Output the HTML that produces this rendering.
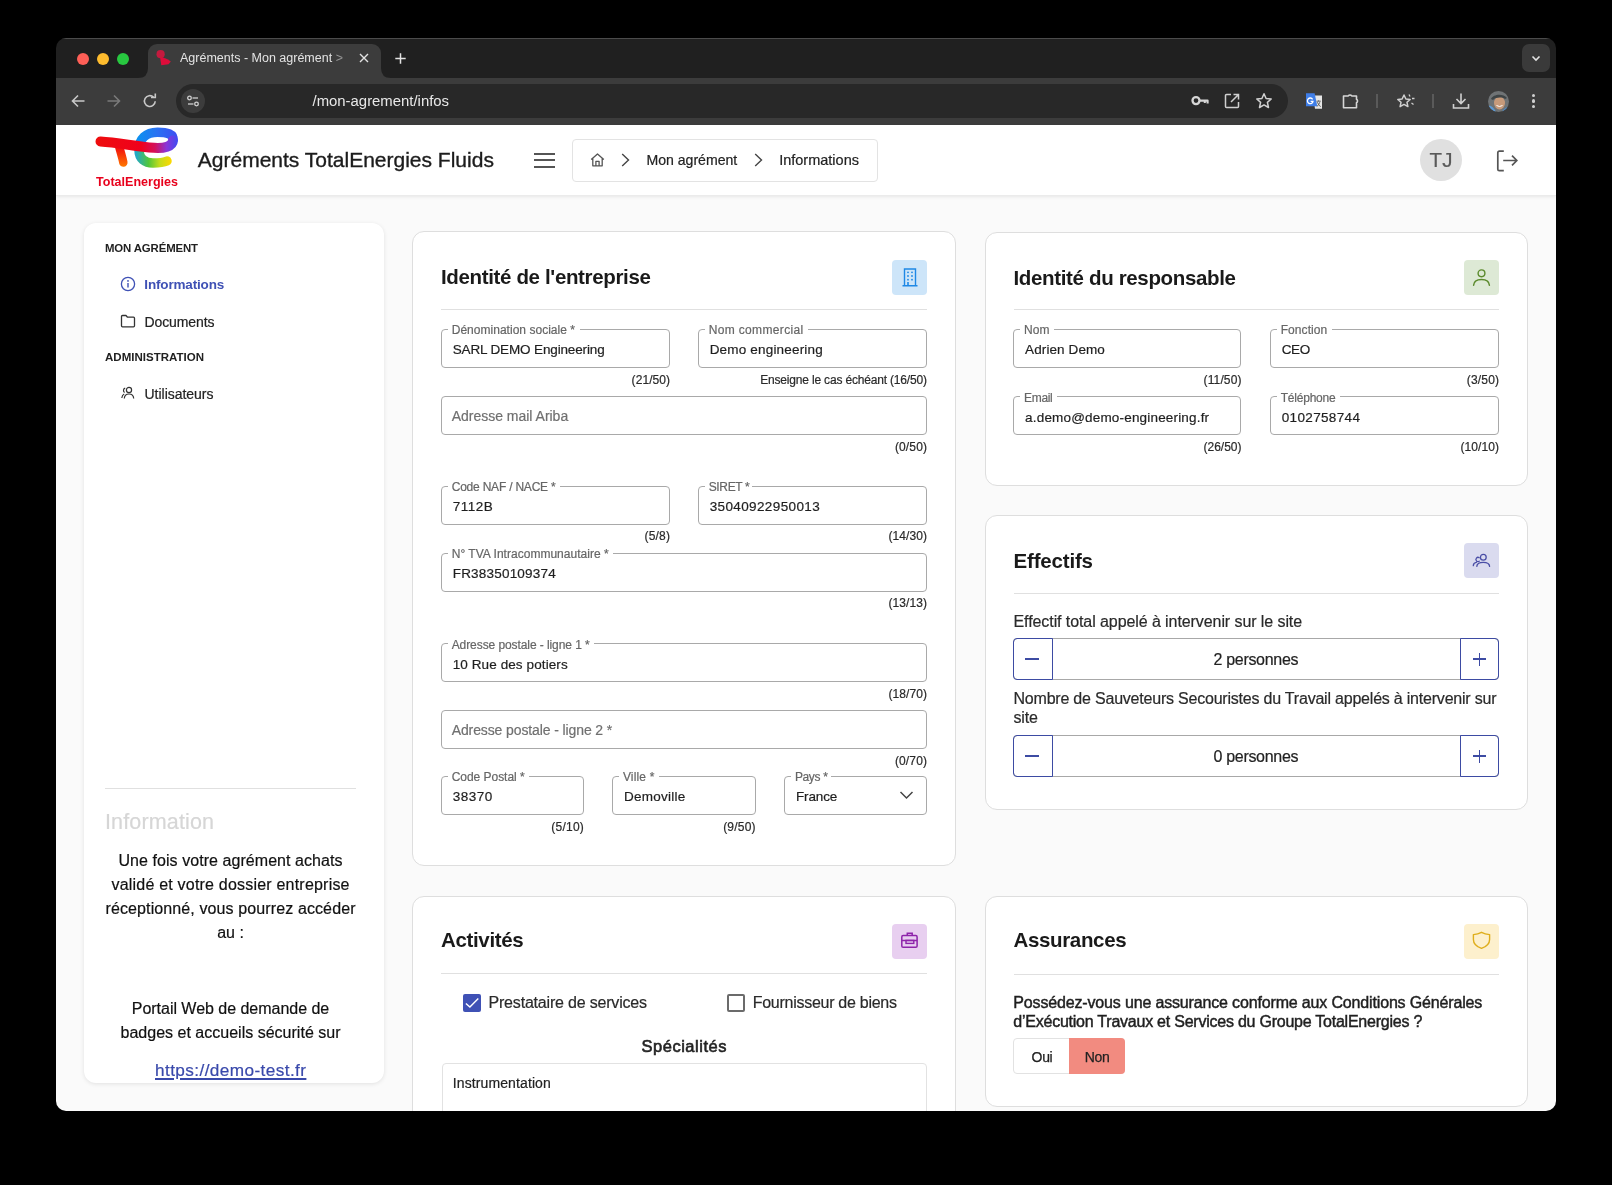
<!DOCTYPE html>
<html><head><meta charset="utf-8">
<style>
*{box-sizing:border-box;margin:0;padding:0}
html,body{width:1612px;height:1185px;background:#000;overflow:hidden;font-family:"Liberation Sans",sans-serif}
#root{position:absolute;left:0;top:0;width:1612px;height:1185px;clip-path:inset(38px 56px 74px 56px round 10px);will-change:transform}
.a{position:absolute}
.t{position:absolute;white-space:nowrap;line-height:1}
svg{overflow:visible}
</style></head><body><div id="root">
<div class="a" style="left:56px;top:38px;width:1500.00px;height:40.00px;background:#202020;"></div>
<div class="a" style="left:56px;top:78px;width:1500.00px;height:47.00px;background:#3c3c3c;"></div>
<div class="a" style="left:56px;top:125px;width:1500.00px;height:986.00px;background:#fafafa;"></div>
<div class="a" style="left:56px;top:38px;width:1500.00px;height:1.00px;background:#4b4b4b;"></div>
<div class="a" style="left:148px;top:44px;width:233px;height:40px;background:#3c3c3c;border-radius:9px 9px 0 0"></div>
<svg class="a" style="left:138px;top:68px" width="10" height="10"><path d="M0 10 Q10 10 10 0 L10 10Z" fill="#3c3c3c"/></svg>
<svg class="a" style="left:381px;top:68px" width="10" height="10"><path d="M10 10 Q0 10 0 0 L0 10Z" fill="#3c3c3c"/></svg>
<div class="a" style="left:77px;top:52.5px;width:12px;height:12px;border-radius:50%;background:#fe5f57"></div>
<div class="a" style="left:97px;top:52.5px;width:12px;height:12px;border-radius:50%;background:#febc2e"></div>
<div class="a" style="left:117px;top:52.5px;width:12px;height:12px;border-radius:50%;background:#28c840"></div>
<svg class="a" style="left:155px;top:49px" width="18" height="18" viewBox="0 0 18 18"><circle cx="5.6" cy="5.2" r="4.1" fill="#c41a3e"/><path d="M5 8.3C8 8.5 12 9.5 15.8 12.5L13.5 15.2L6.3 16.3Z" fill="#dd0c3a"/></svg>
<div class="t" style="top:52.32px;font-size:12.5px;font-weight:400;color:#e3e3e3;left:180px;">Agréments - Mon agrément <span style='color:#9a9a9a'>&gt;</span></div>
<div class="a" style="left:340px;top:48px;width:16.00px;height:22.00px;background:linear-gradient(90deg,rgba(60,60,60,0),#3c3c3c 80%);"></div>
<svg class="a" style="left:358px;top:52px" width="12" height="12" viewBox="0 0 12 12"><path d="M2 2L10 10M10 2L2 10" stroke="#e3e3e3" stroke-width="1.4"/></svg>
<svg class="a" style="left:394.5px;top:52.5px" width="11" height="11" viewBox="0 0 11 11"><path d="M5.5 0.3V10.7M0.3 5.5H10.7" stroke="#e3e3e3" stroke-width="1.5"/></svg>
<div class="a" style="left:1522px;top:44px;width:28.00px;height:28.00px;background:#3a3a3a;border-radius:7px;"></div>
<svg class="a" style="left:1530px;top:52px" width="12" height="12" viewBox="0 0 12 12"><path d="M2.5 4.5L6 8L9.5 4.5" stroke="#e3e3e3" stroke-width="1.6" fill="none"/></svg>
<svg class="a" style="left:70px;top:93px" width="16" height="16" viewBox="0 0 16 16"><path d="M14.5 8H2.5M8 2.5L2.5 8L8 13.5" stroke="#c8c8c8" stroke-width="1.6" fill="none"/></svg>
<svg class="a" style="left:106px;top:93px" width="16" height="16" viewBox="0 0 16 16"><path d="M1.5 8H13.5M8 2.5L13.5 8L8 13.5" stroke="#7a7a7a" stroke-width="1.6" fill="none"/></svg>
<svg class="a" style="left:142px;top:93px" width="16" height="16" viewBox="0 0 16 16"><path d="M13.2 8.2A5.4 5.4 0 1 1 11.6 4.2" stroke="#c8c8c8" stroke-width="1.6" fill="none"/><path d="M9 4.5H13.3V0.5" stroke="#c8c8c8" stroke-width="1.6" fill="none"/></svg>
<div class="a" style="left:176px;top:84px;width:1112.00px;height:34.00px;background:#282828;border-radius:17px;"></div>
<div class="a" style="left:181px;top:89px;width:24.00px;height:24.00px;background:#3c3c3c;border-radius:50%;"></div>
<svg class="a" style="left:185px;top:93px" width="16" height="16" viewBox="0 0 16 16"><circle cx="4.5" cy="5" r="1.8" stroke="#d0d0d0" stroke-width="1.3" fill="none"/><path d="M7.5 5H13" stroke="#d0d0d0" stroke-width="1.3"/><circle cx="11.5" cy="11" r="1.8" stroke="#d0d0d0" stroke-width="1.3" fill="none"/><path d="M3 11H8.5" stroke="#d0d0d0" stroke-width="1.3"/></svg>
<div class="t" style="top:94.19px;font-size:14.9px;font-weight:400;color:#e8e8e8;left:312.5px;">/mon-agrement/infos</div>
<svg class="a" style="left:1190px;top:93px" width="20" height="16" viewBox="0 0 20 16"><circle cx="6" cy="7.6" r="3.5" stroke="#d6d6d6" stroke-width="2.3" fill="none"/><path d="M9.6 7.6H17.6V10.6M14.8 7.6V10" stroke="#d6d6d6" stroke-width="2.1" fill="none" stroke-linejoin="round"/></svg>
<svg class="a" style="left:1224px;top:93px" width="16" height="16" viewBox="0 0 16 16"><path d="M7 1.5H2.5A1 1 0 0 0 1.5 2.5V13.5A1 1 0 0 0 2.5 14.5H13.5A1 1 0 0 0 14.5 13.5V9" stroke="#d0d0d0" stroke-width="1.5" fill="none"/><path d="M9.5 1.5H14.5V6.5M14.5 1.5L7 9" stroke="#d0d0d0" stroke-width="1.5" fill="none"/></svg>
<svg class="a" style="left:1255px;top:92px" width="18" height="18" viewBox="0 0 18 18"><path d="M9 1.8L11.1 6.5L16.2 7L12.4 10.4L13.5 15.5L9 12.9L4.5 15.5L5.6 10.4L1.8 7L6.9 6.5Z" stroke="#d0d0d0" stroke-width="1.5" fill="none" stroke-linejoin="round"/></svg>
<svg class="a" style="left:1305px;top:92px" width="18" height="18" viewBox="0 0 18 18"><path d="M8 3.5H17V16.8H10Z" fill="#e6e6e6"/><path d="M1 1.3H9.6L12.3 14.2H1Z" fill="#3f7ee8"/><path d="M7.6 7.3A2.8 2.8 0 1 0 8 9.3H5.6" stroke="#fff" stroke-width="1.3" fill="none"/><path d="M11.5 9.2H15.8M13.6 8.3V9.3M12.4 10.2Q13.6 14 15.8 14.6M14.8 10.2Q13.8 13.6 11.8 14.4" stroke="#5a5a5a" stroke-width="0.9" fill="none"/></svg>
<svg class="a" style="left:1341px;top:92px" width="18" height="18" viewBox="0 0 18 18"><path d="M2.5 4H7.3A1.9 1.9 0 0 1 10.7 4H15.5V7.3A1.9 1.9 0 0 1 15.5 10.7V15.8H2.5Z" stroke="#d6d6d6" stroke-width="1.6" fill="none" stroke-linejoin="round"/></svg>
<div class="a" style="left:1376px;top:94px;width:2.00px;height:14.00px;background:#5a5a5a;"></div>
<svg class="a" style="left:1396px;top:92px" width="20" height="18" viewBox="0 0 20 18"><path d="M8 3L9.9 7L14.2 7.4L11 10.3L11.9 14.6L8 12.4L4.1 14.6L5 10.3L1.8 7.4L6.1 7Z" stroke="#d0d0d0" stroke-width="1.5" fill="none" stroke-linejoin="round"/><path d="M13 2.5L14 4.5M16 6.5H18.5M15.5 11L17.5 12.5" stroke="#d0d0d0" stroke-width="1.3"/></svg>
<div class="a" style="left:1432px;top:94px;width:2.00px;height:14.00px;background:#5a5a5a;"></div>
<svg class="a" style="left:1452px;top:92px" width="18" height="18" viewBox="0 0 18 18"><path d="M9 1.5V11M4.5 7L9 11.5L13.5 7" stroke="#d0d0d0" stroke-width="1.6" fill="none"/><path d="M1.5 12V16H16.5V12" stroke="#d0d0d0" stroke-width="1.6" fill="none"/></svg>
<svg class="a" style="left:1487.5px;top:90.5px" width="21" height="21" viewBox="0 0 21 21"><defs><clipPath id="avc"><circle cx="10.5" cy="10.5" r="10.5"/></clipPath></defs><g clip-path="url(#avc)"><rect width="21" height="21" fill="#6f7375"/><ellipse cx="11.5" cy="12" rx="5.5" ry="6.5" fill="#c79a7a"/><path d="M3 8C5 3 15 2 19 7L17 8C14 6 8 6 5 9Z" fill="#3e4446"/><path d="M0 15C3 14 6 17 8 21H0Z" fill="#5c9ad6"/><path d="M14 21C15 18 18 16 21 16V21Z" fill="#4a8acb"/><path d="M8.5 14.5Q11.5 16.5 14.5 14.5" stroke="#fff" stroke-width="1" fill="none"/></g></svg>
<div class="a" style="left:1532.2px;top:93.9px;width:3.2px;height:3.2px;border-radius:50%;background:#d0d0d0"></div>
<div class="a" style="left:1532.2px;top:99.4px;width:3.2px;height:3.2px;border-radius:50%;background:#d0d0d0"></div>
<div class="a" style="left:1532.2px;top:104.9px;width:3.2px;height:3.2px;border-radius:50%;background:#d0d0d0"></div>
<div class="a" style="left:56px;top:125px;width:1500.00px;height:71.00px;background:#fff;box-shadow:0 1px 3px rgba(0,0,0,0.08);border-bottom:1px solid #ebebeb;"></div>
<svg class="a" style="left:88px;top:125px" width="100" height="67" viewBox="0 0 100 67">
<defs>
<linearGradient id="eg1" gradientUnits="userSpaceOnUse" x1="8" y1="0" x2="90" y2="0"><stop offset="0" stop-color="#ee0d0d"/><stop offset="0.55" stop-color="#f0001c"/><stop offset="0.72" stop-color="#d4105a"/><stop offset="0.86" stop-color="#8a35d8"/><stop offset="1" stop-color="#3e4cf2"/></linearGradient>
<linearGradient id="eg2" gradientUnits="userSpaceOnUse" x1="48" y1="0" x2="90" y2="0"><stop offset="0" stop-color="#0a93f0"/><stop offset="0.5" stop-color="#2a72f2"/><stop offset="1" stop-color="#3e4cf2"/></linearGradient>
<linearGradient id="eg3" gradientUnits="userSpaceOnUse" x1="48" y1="0" x2="84" y2="0"><stop offset="0" stop-color="#22a8c8"/><stop offset="0.35" stop-color="#52c63a"/><stop offset="0.65" stop-color="#c2dc1c"/><stop offset="1" stop-color="#ffd800"/></linearGradient>
<linearGradient id="tg" gradientUnits="userSpaceOnUse" x1="0" y1="20" x2="0" y2="42"><stop offset="0" stop-color="#f0000f"/><stop offset="1" stop-color="#ff7a00"/></linearGradient>
</defs>
<path d="M51 25 C51 34 57 38 65 38 C71 38 75.5 37.5 79 36" stroke="url(#eg3)" stroke-width="9.5" fill="none" stroke-linecap="round"/>
<path d="M85 15.5 C86 9 79 7.3 69.5 7.3 C58 7.3 51 14 51 25" stroke="url(#eg2)" stroke-width="9.5" fill="none"/>
<path d="M31 21 C32.5 27 34.5 33 35.3 37.5" stroke="url(#tg)" stroke-width="8.5" fill="none" stroke-linecap="round"/>
<path d="M12.5 16.5 C30 17.5 48 21.5 66 22.8 C76 23.5 84.5 21.5 85 15.5" stroke="url(#eg1)" stroke-width="10" fill="none" stroke-linecap="round"/>
<text x="8" y="60.6" font-family="Liberation Sans" font-weight="700" font-size="12.8" fill="#e8001c" textLength="82" lengthAdjust="spacingAndGlyphs">TotalEnergies</text>
</svg>
<div class="t" style="top:149.42px;font-size:21px;font-weight:400;color:#1c1c1c;-webkit-text-stroke:0.35px #1c1c1c;left:197.8px;">Agréments TotalEnergies Fluids</div>
<div class="a" style="left:533.5px;top:153px;width:21.00px;height:2.00px;background:#555;"></div>
<div class="a" style="left:533.5px;top:159.3px;width:21.00px;height:2.00px;background:#555;"></div>
<div class="a" style="left:533.5px;top:165.6px;width:21.00px;height:2.00px;background:#555;"></div>
<div class="a" style="left:572px;top:138.5px;width:306.00px;height:43.00px;border:1px solid #e3e3e3;border-radius:4px;background:#fff;"></div>
<svg class="a" style="left:589.5px;top:153px" width="15" height="14" viewBox="0 0 15 14"><path d="M1.2 6.5L7.5 1L13.8 6.5M2.8 5.3V12.8H12.2V5.3M5.9 12.8V8.3H9.1V12.8" stroke="#555" stroke-width="1.3" fill="none" stroke-linejoin="round"/></svg>
<svg class="a" style="left:621px;top:153px" width="9" height="14" viewBox="0 0 9 14"><path d="M1.2 1L7.5 7L1.2 13" stroke="#444" stroke-width="1.4" fill="none"/></svg>
<svg class="a" style="left:754.3px;top:153px" width="9" height="14" viewBox="0 0 9 14"><path d="M1.2 1L7.5 7L1.2 13" stroke="#444" stroke-width="1.4" fill="none"/></svg>
<div class="t" style="top:153.26px;font-size:14.1px;font-weight:400;color:#222;-webkit-text-stroke:0.2px #222;left:646.4px;">Mon agrément</div>
<div class="t" style="top:152.93px;font-size:14.5px;font-weight:400;color:#222;-webkit-text-stroke:0.2px #222;left:779.2px;">Informations</div>
<div class="a" style="left:1420px;top:139px;width:42.00px;height:42.00px;background:#e0e0e0;border-radius:50%;"></div>
<div class="t" style="top:150.25px;font-size:20.5px;font-weight:400;color:#595959;-webkit-text-stroke:0.2px #595959;left:941.00px;width:1000px;text-align:center;">TJ</div>
<svg class="a" style="left:1495px;top:149px" width="25" height="24" viewBox="0 0 25 24"><path d="M8.8 2.2H4.3A1.5 1.5 0 0 0 2.8 3.7V20.2A1.5 1.5 0 0 0 4.3 21.7H8.8" stroke="#555" stroke-width="1.7" fill="none"/><path d="M8.2 11.5H22M17 6.7L21.8 11.5L17 16.3" stroke="#555" stroke-width="1.7" fill="none"/></svg>
<div class="a" style="left:84px;top:223px;width:300.00px;height:860.00px;background:#fff;border-radius:12px;box-shadow:0 1px 4px rgba(0,0,0,0.10);"></div>
<div class="t" style="top:243.15px;font-size:11.4px;font-weight:700;color:#212121;letter-spacing:-0.136px;left:105px;">MON AGRÉMENT</div>
<svg class="a" style="left:120px;top:276px" width="16" height="16" viewBox="0 0 16 16"><circle cx="8" cy="8" r="6.6" stroke="#3f51b5" stroke-width="1.3" fill="none"/><path d="M8 7V11.5" stroke="#3f51b5" stroke-width="1.4"/><circle cx="8" cy="4.9" r="0.9" fill="#3f51b5"/></svg>
<div class="t" style="top:278.17px;font-size:13.5px;font-weight:700;color:#3f51b5;letter-spacing:-0.161px;left:144.3px;">Informations</div>
<svg class="a" style="left:120px;top:313px" width="16" height="16" viewBox="0 0 16 16"><path d="M1.5 3.5A1 1 0 0 1 2.5 2.5H6L7.5 4.2H13.5A1 1 0 0 1 14.5 5.2V12.8A1 1 0 0 1 13.5 13.8H2.5A1 1 0 0 1 1.5 12.8Z" stroke="#333" stroke-width="1.3" fill="none" stroke-linejoin="round"/></svg>
<div class="t" style="top:314.95px;font-size:14px;font-weight:400;color:#222;letter-spacing:-0.102px;-webkit-text-stroke:0.2px #222;left:144.5px;">Documents</div>
<div class="t" style="top:351.87px;font-size:11.5px;font-weight:700;color:#212121;letter-spacing:0.014px;left:105px;">ADMINISTRATION</div>
<svg class="a" style="left:120px;top:385px" width="16" height="16" viewBox="0 0 16 16"><circle cx="9" cy="5" r="2.6" stroke="#333" stroke-width="1.2" fill="none"/><path d="M4.3 13.5C4.5 10.5 6.5 9 9 9C11.5 9 13.5 10.5 13.7 13.5" stroke="#333" stroke-width="1.2" fill="none"/><path d="M5.2 3.2A2.3 2.3 0 0 0 4.6 7.4M1.8 13C2 11 2.8 9.6 4.2 9" stroke="#333" stroke-width="1.2" fill="none"/></svg>
<div class="t" style="top:386.75px;font-size:14px;font-weight:400;color:#222;letter-spacing:-0.023px;-webkit-text-stroke:0.2px #222;left:144.5px;">Utilisateurs</div>
<div class="a" style="left:105px;top:788px;width:251.00px;height:1.00px;background:#e0e0e0;"></div>
<div class="t" style="top:811.50px;font-size:21.5px;font-weight:400;color:#d6d6d6;letter-spacing:0.144px;-webkit-text-stroke:0.2px #d6d6d6;left:105px;">Information</div>
<div class="t" style="top:853.16px;font-size:16px;font-weight:400;color:#111;letter-spacing:0.057px;-webkit-text-stroke:0.2px #111;left:-269.47px;width:1000px;text-align:center;">Une fois votre agrément achats</div>
<div class="t" style="top:877.06px;font-size:16px;font-weight:400;color:#111;letter-spacing:0.205px;-webkit-text-stroke:0.2px #111;left:-269.40px;width:1000px;text-align:center;">validé et votre dossier entreprise</div>
<div class="t" style="top:901.06px;font-size:16px;font-weight:400;color:#111;letter-spacing:0.113px;-webkit-text-stroke:0.2px #111;left:-269.44px;width:1000px;text-align:center;">réceptionné, vous pourrez accéder</div>
<div class="t" style="top:925.06px;font-size:16px;font-weight:400;color:#111;-webkit-text-stroke:0.2px #111;left:-269.50px;width:1000px;text-align:center;">au :</div>
<div class="t" style="top:1001.46px;font-size:16px;font-weight:400;color:#111;letter-spacing:-0.023px;-webkit-text-stroke:0.2px #111;left:-269.51px;width:1000px;text-align:center;">Portail Web de demande de</div>
<div class="t" style="top:1025.36px;font-size:16px;font-weight:400;color:#111;letter-spacing:0.011px;-webkit-text-stroke:0.2px #111;left:-269.49px;width:1000px;text-align:center;">badges et accueils sécurité sur</div>
<div class="t" style="top:1061.84px;font-size:17.2px;font-weight:400;color:#3949ab;letter-spacing:0.405px;-webkit-text-stroke:0.2px #3949ab;left:-269.30px;width:1000px;text-align:center;text-decoration:underline;text-underline-offset:2px;text-decoration-thickness:1.5px;">https://demo-test.fr</div>
<div class="a" style="left:412px;top:231px;width:543.50px;height:635.00px;background:#fff;border:1px solid #dedede;border-radius:12px;"></div>
<div class="t" style="top:266.85px;font-size:20.5px;font-weight:700;color:#1a1a1a;letter-spacing:-0.35px;left:441px;">Identité de l'entreprise</div>
<div class="a" style="left:892.0px;top:260px;width:35.00px;height:35.00px;background:#cde5f9;border-radius:4px;"></div>
<svg class="a" style="left:902px;top:267px" width="16" height="20" viewBox="0 0 16 20"><path d="M2.5 18.5V2H13.5V18.5M0.5 18.8H15.5" stroke="#1e88e5" stroke-width="1.4" fill="none"/><g fill="#1e88e5"><circle cx="6" cy="5.3" r="0.9"/><circle cx="10" cy="5.3" r="0.9"/><circle cx="6" cy="9" r="0.9"/><circle cx="10" cy="9" r="0.9"/><circle cx="6" cy="12.7" r="0.9"/><circle cx="10" cy="12.7" r="0.9"/></g><path d="M6 15V18.5" stroke="#1e88e5" stroke-width="1.6"/></svg>
<div class="a" style="left:441px;top:309px;width:486.00px;height:1.00px;background:#e0e0e0;"></div>
<div class="a" style="left:441px;top:328.79999999999995px;width:229.00px;height:39.00px;border:1px solid #a9a9a9;border-radius:4px;background:#fff;"></div>
<div class="a" style="left:448px;top:328.2px;width:131.50px;height:2.40px;background:#fff;"></div>
<div class="t" style="top:324.44px;font-size:12px;font-weight:400;color:#666;letter-spacing:0.026px;-webkit-text-stroke:0.2px #666;left:451.7px;">Dénomination sociale *</div>
<div class="t" style="top:343.37px;font-size:13.5px;font-weight:400;color:#1f1f1f;letter-spacing:-0.141px;-webkit-text-stroke:0.2px #1f1f1f;left:452.7px;">SARL DEMO Engineering</div>
<div class="t" style="top:373.64px;font-size:12px;font-weight:400;color:#2a2a2a;letter-spacing:0.061px;-webkit-text-stroke:0.2px #2a2a2a;right:941.94px;">(21/50)</div>
<div class="a" style="left:698px;top:328.79999999999995px;width:229.00px;height:39.00px;border:1px solid #a9a9a9;border-radius:4px;background:#fff;"></div>
<div class="a" style="left:705px;top:328.2px;width:102.70px;height:2.40px;background:#fff;"></div>
<div class="t" style="top:324.44px;font-size:12px;font-weight:400;color:#666;letter-spacing:0.345px;-webkit-text-stroke:0.2px #666;left:708.7px;">Nom commercial</div>
<div class="t" style="top:343.37px;font-size:13.5px;font-weight:400;color:#1f1f1f;letter-spacing:0.178px;-webkit-text-stroke:0.2px #1f1f1f;left:709.7px;">Demo engineering</div>
<div class="t" style="top:373.64px;font-size:12px;font-weight:400;color:#2a2a2a;letter-spacing:-0.177px;-webkit-text-stroke:0.2px #2a2a2a;right:685.18px;">Enseigne le cas échéant (16/50)</div>
<div class="a" style="left:441px;top:396.0px;width:486.00px;height:39.00px;border:1px solid #a9a9a9;border-radius:4px;background:#fff;"></div>
<div class="t" style="top:409.45px;font-size:14px;font-weight:400;color:#707070;letter-spacing:-0.013px;-webkit-text-stroke:0.2px #707070;left:451.7px;">Adresse mail Ariba</div>
<div class="t" style="top:440.84px;font-size:12px;font-weight:400;color:#2a2a2a;letter-spacing:0.148px;-webkit-text-stroke:0.2px #2a2a2a;right:684.85px;">(0/50)</div>
<div class="a" style="left:441px;top:485.59999999999997px;width:229.00px;height:39.00px;border:1px solid #a9a9a9;border-radius:4px;background:#fff;"></div>
<div class="a" style="left:448px;top:485.0px;width:112.20px;height:2.40px;background:#fff;"></div>
<div class="t" style="top:481.24px;font-size:12px;font-weight:400;color:#666;letter-spacing:-0.211px;-webkit-text-stroke:0.2px #666;left:451.7px;">Code NAF / NACE *</div>
<div class="t" style="top:500.17px;font-size:13.5px;font-weight:400;color:#1f1f1f;letter-spacing:0.488px;-webkit-text-stroke:0.2px #1f1f1f;left:452.7px;">7112B</div>
<div class="t" style="top:530.44px;font-size:12px;font-weight:400;color:#2a2a2a;letter-spacing:0.203px;-webkit-text-stroke:0.2px #2a2a2a;right:941.80px;">(5/8)</div>
<div class="a" style="left:698px;top:485.59999999999997px;width:229.00px;height:39.00px;border:1px solid #a9a9a9;border-radius:4px;background:#fff;"></div>
<div class="a" style="left:705px;top:485.0px;width:47.20px;height:2.40px;background:#fff;"></div>
<div class="t" style="top:481.24px;font-size:12px;font-weight:400;color:#666;letter-spacing:-0.35px;-webkit-text-stroke:0.2px #666;left:708.7px;">SIRET *</div>
<div class="t" style="top:500.17px;font-size:13.5px;font-weight:400;color:#1f1f1f;letter-spacing:0.375px;-webkit-text-stroke:0.2px #1f1f1f;left:709.7px;">35040922950013</div>
<div class="t" style="top:530.44px;font-size:12px;font-weight:400;color:#2a2a2a;letter-spacing:0.078px;-webkit-text-stroke:0.2px #2a2a2a;right:684.92px;">(14/30)</div>
<div class="a" style="left:441px;top:552.6px;width:486.00px;height:39.00px;border:1px solid #a9a9a9;border-radius:4px;background:#fff;"></div>
<div class="a" style="left:448px;top:552.0px;width:165.20px;height:2.40px;background:#fff;"></div>
<div class="t" style="top:548.24px;font-size:12px;font-weight:400;color:#666;letter-spacing:0.022px;-webkit-text-stroke:0.2px #666;left:451.7px;">N° TVA Intracommunautaire *</div>
<div class="t" style="top:567.17px;font-size:13.5px;font-weight:400;color:#1f1f1f;letter-spacing:0.201px;-webkit-text-stroke:0.2px #1f1f1f;left:452.7px;">FR38350109374</div>
<div class="t" style="top:597.44px;font-size:12px;font-weight:400;color:#2a2a2a;letter-spacing:0.078px;-webkit-text-stroke:0.2px #2a2a2a;right:684.92px;">(13/13)</div>
<div class="a" style="left:441px;top:643.0px;width:486.00px;height:39.00px;border:1px solid #a9a9a9;border-radius:4px;background:#fff;"></div>
<div class="a" style="left:448px;top:642.4px;width:146.20px;height:2.40px;background:#fff;"></div>
<div class="t" style="top:638.64px;font-size:12px;font-weight:400;color:#666;letter-spacing:-0.081px;-webkit-text-stroke:0.2px #666;left:451.7px;">Adresse postale - ligne 1 *</div>
<div class="t" style="top:657.57px;font-size:13.5px;font-weight:400;color:#1f1f1f;letter-spacing:0.098px;-webkit-text-stroke:0.2px #1f1f1f;left:452.7px;">10 Rue des potiers</div>
<div class="t" style="top:687.84px;font-size:12px;font-weight:400;color:#2a2a2a;letter-spacing:0.078px;-webkit-text-stroke:0.2px #2a2a2a;right:684.92px;">(18/70)</div>
<div class="a" style="left:441px;top:709.8px;width:486.00px;height:39.00px;border:1px solid #a9a9a9;border-radius:4px;background:#fff;"></div>
<div class="t" style="top:723.25px;font-size:14px;font-weight:400;color:#707070;letter-spacing:-0.109px;-webkit-text-stroke:0.2px #707070;left:451.7px;">Adresse postale - ligne 2 *</div>
<div class="t" style="top:754.64px;font-size:12px;font-weight:400;color:#2a2a2a;letter-spacing:0.148px;-webkit-text-stroke:0.2px #2a2a2a;right:684.85px;">(0/70)</div>
<div class="a" style="left:441px;top:775.8px;width:142.80px;height:39.00px;border:1px solid #a9a9a9;border-radius:4px;background:#fff;"></div>
<div class="a" style="left:448px;top:775.1999999999999px;width:81.20px;height:2.40px;background:#fff;"></div>
<div class="t" style="top:771.44px;font-size:12px;font-weight:400;color:#666;letter-spacing:-0.033px;-webkit-text-stroke:0.2px #666;left:451.7px;">Code Postal *</div>
<div class="t" style="top:790.37px;font-size:13.5px;font-weight:400;color:#1f1f1f;letter-spacing:0.488px;-webkit-text-stroke:0.2px #1f1f1f;left:452.7px;">38370</div>
<div class="t" style="top:820.64px;font-size:12px;font-weight:400;color:#2a2a2a;letter-spacing:0.228px;-webkit-text-stroke:0.2px #2a2a2a;right:1027.97px;">(5/10)</div>
<div class="a" style="left:612.2px;top:775.8px;width:143.40px;height:39.00px;border:1px solid #a9a9a9;border-radius:4px;background:#fff;"></div>
<div class="a" style="left:619.2px;top:775.1999999999999px;width:39.70px;height:2.40px;background:#fff;"></div>
<div class="t" style="top:771.44px;font-size:12px;font-weight:400;color:#666;letter-spacing:0.172px;-webkit-text-stroke:0.2px #666;left:622.9000000000001px;">Ville *</div>
<div class="t" style="top:790.37px;font-size:13.5px;font-weight:400;color:#1f1f1f;letter-spacing:0.277px;-webkit-text-stroke:0.2px #1f1f1f;left:623.9000000000001px;">Demoville</div>
<div class="t" style="top:820.64px;font-size:12px;font-weight:400;color:#2a2a2a;letter-spacing:0.228px;-webkit-text-stroke:0.2px #2a2a2a;right:856.17px;">(9/50)</div>
<div class="a" style="left:784.2px;top:775.8px;width:142.60px;height:39.00px;border:1px solid #a9a9a9;border-radius:4px;background:#fff;"></div>
<div class="a" style="left:791.2px;top:775.1999999999999px;width:40.20px;height:2.40px;background:#fff;"></div>
<div class="t" style="top:771.44px;font-size:12px;font-weight:400;color:#666;letter-spacing:-0.35px;-webkit-text-stroke:0.2px #666;left:794.9000000000001px;">Pays *</div>
<div class="t" style="top:790.37px;font-size:13.5px;font-weight:400;color:#1f1f1f;letter-spacing:-0.106px;-webkit-text-stroke:0.2px #1f1f1f;left:795.9000000000001px;">France</div>
<svg class="a" style="left:899px;top:790px" width="15" height="10" viewBox="0 0 15 10"><path d="M1.5 2L7.5 8L13.5 2" stroke="#444" stroke-width="1.5" fill="none"/></svg>
<div class="a" style="left:984.5px;top:231.5px;width:543.00px;height:254.50px;background:#fff;border:1px solid #dedede;border-radius:12px;"></div>
<div class="t" style="top:267.85px;font-size:20.5px;font-weight:700;color:#1a1a1a;letter-spacing:-0.346px;left:1013.5px;">Identité du responsable</div>
<div class="a" style="left:1464.0px;top:260px;width:35.00px;height:35.00px;background:#dde9d5;border-radius:4px;"></div>
<svg class="a" style="left:1471px;top:267px" width="21" height="21" viewBox="0 0 21 21"><circle cx="10.5" cy="6.3" r="3.4" stroke="#5b8a2c" stroke-width="1.4" fill="none"/><path d="M2.6 18.3C2.8 14.2 6.2 12.4 10.5 12.4C14.8 12.4 18.2 14.2 18.4 18.3" stroke="#5b8a2c" stroke-width="1.5" fill="none" stroke-linecap="round"/></svg>
<div class="a" style="left:1013.5px;top:309px;width:485.50px;height:1.00px;background:#e0e0e0;"></div>
<div class="a" style="left:1013.4px;top:328.79999999999995px;width:228.10px;height:39.00px;border:1px solid #a9a9a9;border-radius:4px;background:#fff;"></div>
<div class="a" style="left:1020.4px;top:328.2px;width:33.50px;height:2.40px;background:#fff;"></div>
<div class="t" style="top:324.44px;font-size:12px;font-weight:400;color:#666;letter-spacing:-0.022px;-webkit-text-stroke:0.2px #666;left:1024.1px;">Nom</div>
<div class="t" style="top:343.37px;font-size:13.5px;font-weight:400;color:#1f1f1f;letter-spacing:0.1px;-webkit-text-stroke:0.2px #1f1f1f;left:1025.1px;">Adrien Demo</div>
<div class="t" style="top:373.64px;font-size:12px;font-weight:400;color:#2a2a2a;letter-spacing:0.143px;-webkit-text-stroke:0.2px #2a2a2a;right:370.36px;">(11/50)</div>
<div class="a" style="left:1270px;top:328.79999999999995px;width:229.00px;height:39.00px;border:1px solid #a9a9a9;border-radius:4px;background:#fff;"></div>
<div class="a" style="left:1277px;top:328.2px;width:54.70px;height:2.40px;background:#fff;"></div>
<div class="t" style="top:324.44px;font-size:12px;font-weight:400;color:#666;letter-spacing:0.067px;-webkit-text-stroke:0.2px #666;left:1280.7px;">Fonction</div>
<div class="t" style="top:343.37px;font-size:13.5px;font-weight:400;color:#1f1f1f;letter-spacing:-0.35px;-webkit-text-stroke:0.2px #1f1f1f;left:1281.7px;">CEO</div>
<div class="t" style="top:373.64px;font-size:12px;font-weight:400;color:#2a2a2a;letter-spacing:0.188px;-webkit-text-stroke:0.2px #2a2a2a;right:112.81px;">(3/50)</div>
<div class="a" style="left:1013.4px;top:396.0px;width:228.10px;height:39.00px;border:1px solid #a9a9a9;border-radius:4px;background:#fff;"></div>
<div class="a" style="left:1020.4px;top:395.40000000000003px;width:36.70px;height:2.40px;background:#fff;"></div>
<div class="t" style="top:391.64px;font-size:12px;font-weight:400;color:#666;letter-spacing:-0.35px;-webkit-text-stroke:0.2px #666;left:1024.1px;">Email</div>
<div class="t" style="top:410.57px;font-size:13.5px;font-weight:400;color:#1f1f1f;letter-spacing:0.177px;-webkit-text-stroke:0.2px #1f1f1f;left:1025.1px;">a.demo@demo-engineering.fr</div>
<div class="t" style="top:440.84px;font-size:12px;font-weight:400;color:#2a2a2a;letter-spacing:-0.005px;-webkit-text-stroke:0.2px #2a2a2a;right:370.50px;">(26/50)</div>
<div class="a" style="left:1270px;top:396.0px;width:229.00px;height:39.00px;border:1px solid #a9a9a9;border-radius:4px;background:#fff;"></div>
<div class="a" style="left:1277px;top:395.40000000000003px;width:63.20px;height:2.40px;background:#fff;"></div>
<div class="t" style="top:391.64px;font-size:12px;font-weight:400;color:#666;letter-spacing:-0.215px;-webkit-text-stroke:0.2px #666;left:1280.7px;">Téléphone</div>
<div class="t" style="top:410.57px;font-size:13.5px;font-weight:400;color:#1f1f1f;letter-spacing:0.356px;-webkit-text-stroke:0.2px #1f1f1f;left:1281.7px;">0102758744</div>
<div class="t" style="top:440.84px;font-size:12px;font-weight:400;color:#2a2a2a;letter-spacing:0.078px;-webkit-text-stroke:0.2px #2a2a2a;right:112.92px;">(10/10)</div>
<div class="a" style="left:984.5px;top:514.6px;width:543.00px;height:295.80px;background:#fff;border:1px solid #dedede;border-radius:12px;"></div>
<div class="t" style="top:550.75px;font-size:20.5px;font-weight:700;color:#1a1a1a;letter-spacing:-0.174px;left:1013.5px;">Effectifs</div>
<div class="a" style="left:1464.0px;top:543.2px;width:35.00px;height:35.00px;background:#dadbef;border-radius:4px;"></div>
<svg class="a" style="left:1471px;top:550px" width="21" height="21" viewBox="0 0 21 21"><circle cx="12.3" cy="7.2" r="2.9" stroke="#4a4ea6" stroke-width="1.3" fill="none"/><path d="M5.8 16.4C6 13.6 8.6 12.4 12.3 12.4C16 12.4 18.4 13.6 18.6 16.4" stroke="#4a4ea6" stroke-width="1.3" fill="none" stroke-linecap="round"/><path d="M8.2 7.7A2.1 2.1 0 1 0 8.2 11.2M2.3 15.7C2.4 13.7 3.5 12.6 5.4 12.4" stroke="#4a4ea6" stroke-width="1.3" fill="none" stroke-linecap="round"/></svg>
<div class="a" style="left:1013.5px;top:592.5px;width:485.50px;height:1.00px;background:#e0e0e0;"></div>
<div class="t" style="top:613.66px;font-size:16px;font-weight:400;color:#2a2a2a;letter-spacing:-0.082px;-webkit-text-stroke:0.2px #2a2a2a;left:1013.5px;">Effectif total appelé à intervenir sur le site</div>
<div class="a" style="left:1013px;top:638px;width:486.00px;height:42.00px;border:1px solid #a8a8a8;border-radius:4px;background:#fff;"></div>
<div class="a" style="left:1013px;top:638px;width:39.50px;height:42.00px;border:1.2px solid #3d4ba3;border-radius:4px 0 0 4px;"></div>
<div class="a" style="left:1460.3px;top:638px;width:38.70px;height:42.00px;border:1.2px solid #3d4ba3;border-radius:0 4px 4px 0;"></div>
<div class="a" style="left:1025.3px;top:658.2px;width:13.70px;height:1.60px;background:#3d4ba3;"></div>
<div class="a" style="left:1473.2px;top:658.4px;width:12.60px;height:1.20px;background:#3d4ba3;"></div>
<div class="a" style="left:1478.9px;top:652.5px;width:1.20px;height:13.00px;background:#3d4ba3;"></div>
<div class="t" style="top:651.76px;font-size:16px;font-weight:400;color:#222;letter-spacing:-0.306px;-webkit-text-stroke:0.2px #222;left:755.85px;width:1000px;text-align:center;">2 personnes</div>
<div class="t" style="top:691.46px;font-size:16px;font-weight:400;color:#2a2a2a;letter-spacing:-0.211px;-webkit-text-stroke:0.2px #2a2a2a;left:1013.5px;">Nombre de Sauveteurs Secouristes du Travail appelés à intervenir sur</div>
<div class="t" style="top:710.36px;font-size:16px;font-weight:400;color:#2a2a2a;letter-spacing:-0.135px;-webkit-text-stroke:0.2px #2a2a2a;left:1013.5px;">site</div>
<div class="a" style="left:1013px;top:735.2px;width:486.00px;height:41.60px;border:1px solid #a8a8a8;border-radius:4px;background:#fff;"></div>
<div class="a" style="left:1013px;top:735.2px;width:39.50px;height:41.60px;border:1.2px solid #3d4ba3;border-radius:4px 0 0 4px;"></div>
<div class="a" style="left:1460.3px;top:735.2px;width:38.70px;height:41.60px;border:1.2px solid #3d4ba3;border-radius:0 4px 4px 0;"></div>
<div class="a" style="left:1025.3px;top:755.2px;width:13.70px;height:1.60px;background:#3d4ba3;"></div>
<div class="a" style="left:1473.2px;top:755.4px;width:12.60px;height:1.20px;background:#3d4ba3;"></div>
<div class="a" style="left:1478.9px;top:749.5px;width:1.20px;height:13.00px;background:#3d4ba3;"></div>
<div class="t" style="top:748.66px;font-size:16px;font-weight:400;color:#222;letter-spacing:-0.306px;-webkit-text-stroke:0.2px #222;left:755.85px;width:1000px;text-align:center;">0 personnes</div>
<div class="a" style="left:412px;top:895.6px;width:543.50px;height:244.40px;background:#fff;border:1px solid #dedede;border-radius:12px;"></div>
<div class="t" style="top:930.05px;font-size:20.5px;font-weight:700;color:#1a1a1a;letter-spacing:-0.35px;left:441px;">Activités</div>
<div class="a" style="left:892.0px;top:924px;width:35.00px;height:35.00px;background:#e8cff0;border-radius:4px;"></div>
<svg class="a" style="left:899px;top:931px" width="20" height="20" viewBox="0 0 20 20"><rect x="2.8" y="4.6" width="15.3" height="11.6" rx="1.3" stroke="#8e24aa" stroke-width="1.5" fill="none"/><path d="M8.3 4.6V2.3H13.2V4.6M2.8 9.4H18.1" stroke="#8e24aa" stroke-width="1.5" fill="none"/><rect x="7" y="9.4" width="7.8" height="3" stroke="#8e24aa" stroke-width="1.4" fill="none"/></svg>
<div class="a" style="left:441px;top:973px;width:486.00px;height:1.00px;background:#e0e0e0;"></div>
<div class="a" style="left:463.2px;top:994.2px;width:17.60px;height:17.60px;background:#3f51b5;border-radius:2px;"></div>
<svg class="a" style="left:463px;top:994px" width="18" height="18" viewBox="0 0 18 18"><path d="M2.9 9.4L6.9 13L15.3 4.4" stroke="#fff" stroke-width="1.4" fill="none"/></svg>
<div class="t" style="top:994.66px;font-size:16px;font-weight:400;color:#2a2a2a;letter-spacing:-0.192px;-webkit-text-stroke:0.2px #2a2a2a;left:488.5px;">Prestataire de services</div>
<div class="a" style="left:727.4px;top:994.2px;width:17.60px;height:17.60px;border:2px solid #6b6b6b;border-radius:2px;"></div>
<div class="t" style="top:994.66px;font-size:16px;font-weight:400;color:#2a2a2a;letter-spacing:-0.27px;-webkit-text-stroke:0.2px #2a2a2a;left:752.7px;">Fournisseur de biens</div>
<div class="t" style="top:1037.63px;font-size:16.5px;font-weight:400;color:#222;letter-spacing:0.5px;-webkit-text-stroke:0.6px #222;left:184.25px;width:1000px;text-align:center;">Spécialités</div>
<div class="a" style="left:441.5px;top:1063.2px;width:485.00px;height:76.80px;border:1px solid #e2e2e2;border-radius:4px;background:#fff;"></div>
<div class="t" style="top:1075.55px;font-size:14px;font-weight:400;color:#222;letter-spacing:0.107px;-webkit-text-stroke:0.2px #222;left:452.8px;">Instrumentation</div>
<div class="a" style="left:984.5px;top:895.6px;width:543.00px;height:211.60px;background:#fff;border:1px solid #dedede;border-radius:12px;"></div>
<div class="t" style="top:930.25px;font-size:20.5px;font-weight:700;color:#1a1a1a;letter-spacing:-0.35px;left:1013.5px;">Assurances</div>
<div class="a" style="left:1464.0px;top:924.2px;width:35.00px;height:35.00px;background:#fdf0cd;border-radius:4px;"></div>
<svg class="a" style="left:1471px;top:930px" width="21" height="21" viewBox="0 0 21 21"><path d="M10.5 2.3C8 3.6 5.2 4.3 2.4 4.6V9.4C2.4 13.4 6 16.7 10.5 18.4C15 16.7 18.6 13.4 18.6 9.4V4.6C15.8 4.3 13 3.6 10.5 2.3Z" stroke="#dfae1c" stroke-width="1.4" fill="none" stroke-linejoin="round"/></svg>
<div class="a" style="left:1013.5px;top:973.5px;width:485.50px;height:1.00px;background:#e0e0e0;"></div>
<div class="t" style="top:994.66px;font-size:16px;font-weight:400;color:#1f1f1f;letter-spacing:-0.158px;-webkit-text-stroke:0.45px #1f1f1f;left:1013.3px;">Possédez-vous une assurance conforme aux Conditions Générales</div>
<div class="t" style="top:1013.66px;font-size:16px;font-weight:400;color:#1f1f1f;letter-spacing:-0.235px;-webkit-text-stroke:0.45px #1f1f1f;left:1013.3px;">d’Exécution Travaux et Services du Groupe TotalEnergies ?</div>
<div class="a" style="left:1013.3px;top:1038.1px;width:111.70px;height:35.50px;border:1px solid #e2e2e2;border-radius:4px;background:#fff;"></div>
<div class="a" style="left:1069px;top:1038.1px;width:56.00px;height:35.50px;background:#f28b80;border-radius:0 4px 4px 0;"></div>
<div class="t" style="top:1049.55px;font-size:14px;font-weight:400;color:#222;letter-spacing:-0.35px;-webkit-text-stroke:0.25px #222;left:1031.6px;">Oui</div>
<div class="t" style="top:1049.55px;font-size:14px;font-weight:400;color:#222;letter-spacing:-0.35px;-webkit-text-stroke:0.25px #222;left:1084.8px;">Non</div>
</div></body></html>
